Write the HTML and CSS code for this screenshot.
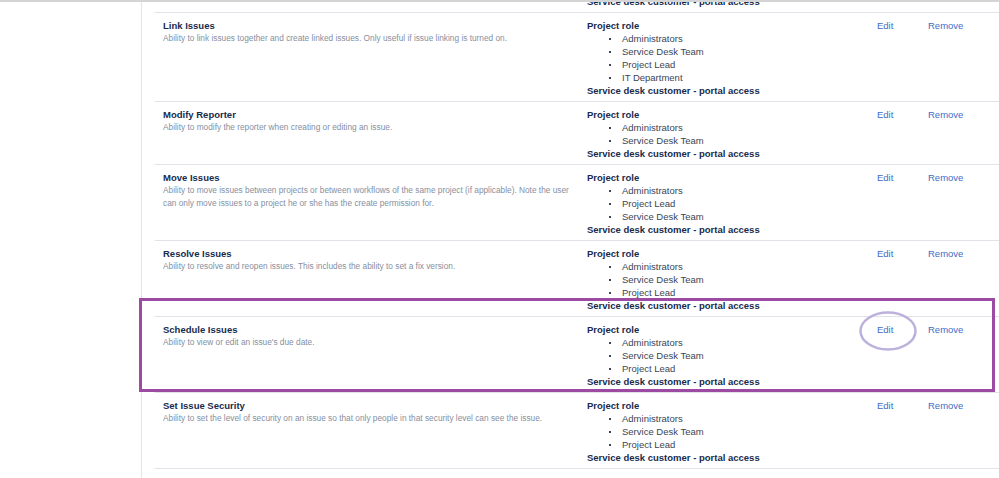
FILE: index.html
```html
<!DOCTYPE html>
<html lang="en">
<head>
    <meta charset="UTF-8">
    <title>Permission scheme</title>
    <link rel="stylesheet" href="styles.css">
</head>
<body>
<div class="top-bar"></div>
<div class="page">
    <div class="sidebar"></div>
    <div class="main">
        <div class="perm-table">

            <div class="perm-row">
                <div class="perm-name">
                    <b>Edit Issues</b>
                    <p>Ability to edit issues.</p>
                </div>
                <div class="perm-holders">
                    <b>Project role</b>
                    <ul>
                        <li>Administrators</li>
                        <li>Service Desk Team</li>
                        <li>Project Lead</li>
                    </ul>
                    <b>Service desk customer - portal access</b>
                </div>
                <div class="perm-action"><a href="#">Edit</a></div>
                <div class="perm-action"><a href="#">Remove</a></div>
            </div>

            <div class="perm-row">
                <div class="perm-name">
                    <b>Link Issues</b>
                    <p>Ability to link issues together and create linked issues. Only useful if issue linking is turned on.</p>
                </div>
                <div class="perm-holders">
                    <b>Project role</b>
                    <ul>
                        <li>Administrators</li>
                        <li>Service Desk Team</li>
                        <li>Project Lead</li>
                        <li>IT Department</li>
                    </ul>
                    <b>Service desk customer - portal access</b>
                </div>
                <div class="perm-action"><a href="#">Edit</a></div>
                <div class="perm-action"><a href="#">Remove</a></div>
            </div>

            <div class="perm-row">
                <div class="perm-name">
                    <b>Modify Reporter</b>
                    <p>Ability to modify the reporter when creating or editing an issue.</p>
                </div>
                <div class="perm-holders">
                    <b>Project role</b>
                    <ul>
                        <li>Administrators</li>
                        <li>Service Desk Team</li>
                    </ul>
                    <b>Service desk customer - portal access</b>
                </div>
                <div class="perm-action"><a href="#">Edit</a></div>
                <div class="perm-action"><a href="#">Remove</a></div>
            </div>

            <div class="perm-row">
                <div class="perm-name">
                    <b>Move Issues</b>
                    <p>Ability to move issues between projects or between workflows of the same project (if applicable). Note the user can only move issues to a project he or she has the create permission for.</p>
                </div>
                <div class="perm-holders">
                    <b>Project role</b>
                    <ul>
                        <li>Administrators</li>
                        <li>Project Lead</li>
                        <li>Service Desk Team</li>
                    </ul>
                    <b>Service desk customer - portal access</b>
                </div>
                <div class="perm-action"><a href="#">Edit</a></div>
                <div class="perm-action"><a href="#">Remove</a></div>
            </div>

            <div class="perm-row">
                <div class="perm-name">
                    <b>Resolve Issues</b>
                    <p>Ability to resolve and reopen issues. This includes the ability to set a fix version.</p>
                </div>
                <div class="perm-holders">
                    <b>Project role</b>
                    <ul>
                        <li>Administrators</li>
                        <li>Service Desk Team</li>
                        <li>Project Lead</li>
                    </ul>
                    <b>Service desk customer - portal access</b>
                </div>
                <div class="perm-action"><a href="#">Edit</a></div>
                <div class="perm-action"><a href="#">Remove</a></div>
            </div>

            <div class="perm-row">
                <div class="perm-name">
                    <b>Schedule Issues</b>
                    <p>Ability to view or edit an issue's due date.</p>
                </div>
                <div class="perm-holders">
                    <b>Project role</b>
                    <ul>
                        <li>Administrators</li>
                        <li>Service Desk Team</li>
                        <li>Project Lead</li>
                    </ul>
                    <b>Service desk customer - portal access</b>
                </div>
                <div class="perm-action"><a href="#">Edit</a></div>
                <div class="perm-action"><a href="#">Remove</a></div>
            </div>

            <div class="perm-row">
                <div class="perm-name">
                    <b>Set Issue Security</b>
                    <p>Ability to set the level of security on an issue so that only people in that security level can see the issue.</p>
                </div>
                <div class="perm-holders">
                    <b>Project role</b>
                    <ul>
                        <li>Administrators</li>
                        <li>Service Desk Team</li>
                        <li>Project Lead</li>
                    </ul>
                    <b>Service desk customer - portal access</b>
                </div>
                <div class="perm-action"><a href="#">Edit</a></div>
                <div class="perm-action"><a href="#">Remove</a></div>
            </div>

            <div class="perm-row">
                <div class="perm-name">
                    <b>Transition Issues</b>
                    <p>Ability to transition issues.</p>
                </div>
                <div class="perm-holders">
                    <b>Project role</b>
                    <ul>
                        <li>Administrators</li>
                        <li>Service Desk Team</li>
                    </ul>
                    <b>Service desk customer - portal access</b>
                </div>
                <div class="perm-action"><a href="#">Edit</a></div>
                <div class="perm-action"><a href="#">Remove</a></div>
            </div>

        </div>
    </div>
</div>

<!-- annotation drawn over the screenshot -->
<div class="highlight-box"></div>
<svg class="highlight-ring" width="60" height="42" viewBox="0 0 60 42">
    <ellipse cx="30" cy="21" rx="27.5" ry="18.5" fill="none" stroke="#bcb0dc" stroke-width="2.5"/>
</svg>
</body>
</html>
```

FILE: styles.css
```css
html, body {
    margin: 0;
    padding: 0;
    background: #fff;
    overflow: hidden;
}

body {
    font-family: 'Liberation Sans', Arial, sans-serif;
    font-size: 9.5px;
    color: #172b4d;
    width: 999px;
    height: 478px;
    position: relative;
}

.top-bar {
    height: 2px;
    background: #d5d5d5;
}

.page {
    display: flex;
    height: 476px;
}

.sidebar {
    width: 141px;
    flex: none;
    border-right: 1px solid #e4e4e4;
}

.main {
    flex: 1;
    overflow: hidden;
    padding-left: 13px;
}

/* the list is scrolled: the first row sits above the window */
.perm-table {
    margin-top: -66px;
}

.perm-row {
    display: grid;
    grid-template-columns: 424px 290px 51px 1fr;
    border-top: 1px solid #e1e3e8;
    padding: 6px 0 4px 0;
    line-height: 13px;
}

.perm-row > div {
    padding-left: 8px;
}

.perm-name b {
    display: block;
    font-size: 9.5px;
    color: #172b4d;
}

.perm-name p {
    margin: 0;
    font-size: 8.3px;
    color: #868f9f;
    padding-right: 6px;
}

.perm-holders b {
    display: block;
    color: #172b4d;
}

.perm-holders ul {
    list-style: none;
    margin: 0;
    padding: 0;
}

.perm-holders li {
    display: flex;
    align-items: center;
    color: #3a4456;
}

.perm-holders li::before {
    content: '';
    width: 2px;
    height: 2px;
    background: #3a4456;
    margin-left: 22px;
    margin-right: 11px;
}

.perm-action a {
    color: #3f6cc6;
    text-decoration: none;
}

.highlight-box {
    position: absolute;
    left: 139px;
    top: 298px;
    width: 850px;
    height: 88px;
    border: 3px solid #9d4aa2;
}

.highlight-ring {
    position: absolute;
    left: 858px;
    top: 310px;
}
```
